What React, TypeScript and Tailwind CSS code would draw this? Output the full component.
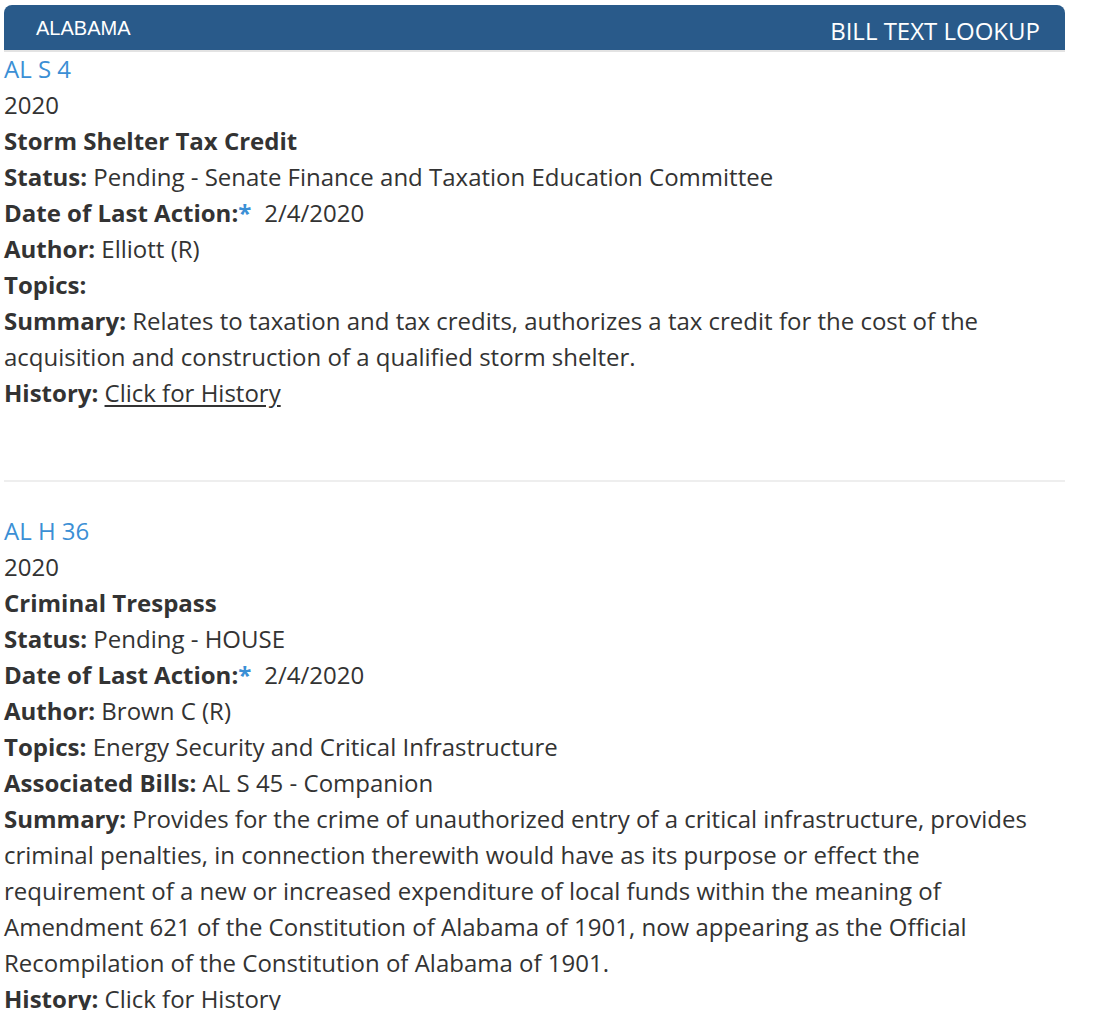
type Bill = {
  id: string;
  year: string;
  title: string;
  status: string;
  lastAction: string;
  author: string;
  topics: string;
  associated?: string;
  summary: string;
  historyLinked: boolean;
};

const BILLS: Bill[] = [
  {
    id: "AL S 4",
    year: "2020",
    title: "Storm Shelter Tax Credit",
    status: "Pending - Senate Finance and Taxation Education Committee",
    lastAction: "2/4/2020",
    author: "Elliott (R)",
    topics: "",
    summary:
      "Relates to taxation and tax credits, authorizes a tax credit for the cost of the acquisition and construction of a qualified storm shelter.",
    historyLinked: true,
  },
  {
    id: "AL H 36",
    year: "2020",
    title: "Criminal Trespass",
    status: "Pending - HOUSE",
    lastAction: "2/4/2020",
    author: "Brown C (R)",
    topics: "Energy Security and Critical Infrastructure",
    associated: "AL S 45 - Companion",
    summary:
      "Provides for the crime of unauthorized entry of a critical infrastructure, provides criminal penalties, in connection therewith would have as its purpose or effect the requirement of a new or increased expenditure of local funds within the meaning of Amendment 621 of the Constitution of Alabama of 1901, now appearing as the Official Recompilation of the Constitution of Alabama of 1901.",
    historyLinked: false,
  },
];

function Field({ label, children }: { label: string; children?: React.ReactNode }) {
  return (
    <div>
      <span className="font-bold">{label}</span> {children}
    </div>
  );
}

function BillEntry({ bill }: { bill: Bill }) {
  return (
    <article>
      <a href="#" className="block text-[#3b8fd5]">
        {bill.id}
      </a>
      <div>{bill.year}</div>
      <div className="font-bold">{bill.title}</div>
      <Field label="Status:">{bill.status}</Field>
      <div>
        <span className="font-bold">Date of Last Action:</span>
        <span className="font-bold text-[#3b8fd5]">*</span>
        <span className="ml-[13px]">{bill.lastAction}</span>
      </div>
      <Field label="Author:">{bill.author}</Field>
      <Field label="Topics:">{bill.topics}</Field>
      {bill.associated ? <Field label="Associated Bills:">{bill.associated}</Field> : null}
      <Field label="Summary:">{bill.summary}</Field>
      <Field label="History:">
        {bill.historyLinked ? (
          <a href="#" className="underline underline-offset-[3px]">
            Click for History
          </a>
        ) : (
          <span>Click for History</span>
        )}
      </Field>
    </article>
  );
}

export default function App() {
  return (
    <main className="min-h-screen bg-white pt-[5px] pl-[4px] font-['Open_Sans',sans-serif] text-[24px] leading-[36px] text-[#333333]">
      <div className="w-[1061px]">
        <header className="flex h-[47px] items-start justify-between rounded-t-[8px] border-b-2 border-[#e3e3e3] bg-[#295a8a] text-white">
          <span className="pl-[32px] pt-[9px] font-['Liberation_Sans',Arial,sans-serif] text-[20px] leading-[28px]">
            ALABAMA
          </span>
          <span className="pr-[25px] pt-[11px] text-[24px] leading-[30px]">BILL TEXT LOOKUP</span>
        </header>

        <div className="-mt-[1px]">
          <BillEntry bill={BILLS[0]} />
        </div>
        <hr className="mt-[69px] mb-[31px] border-t-2 border-[#eeeeee]" />
        <BillEntry bill={BILLS[1]} />
      </div>
    </main>
  );
}
